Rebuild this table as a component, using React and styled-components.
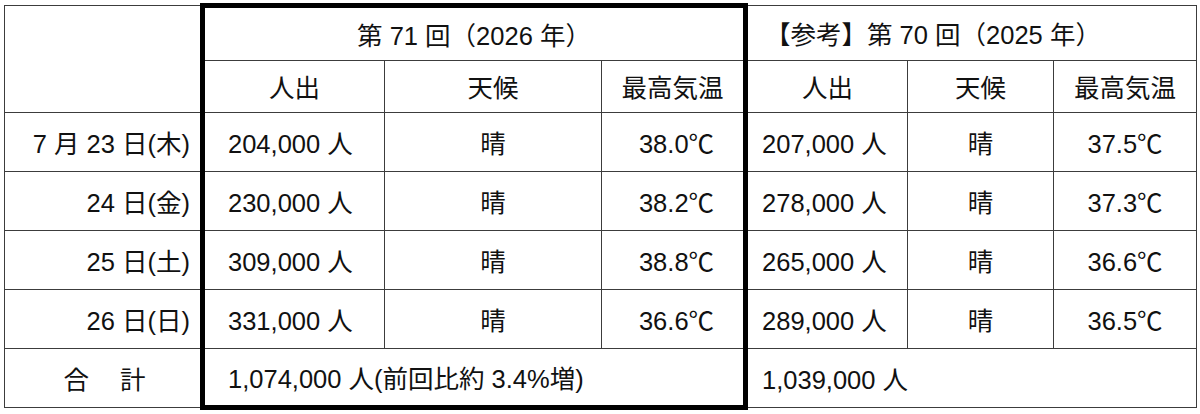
import React from "react";
import styled, { createGlobalStyle, css } from "styled-components";

const GlobalStyle = createGlobalStyle`
  body {
    margin: 0;
    background: #fff;
    font-family: "Liberation Sans", "Noto Sans CJK JP", sans-serif;
    color: #111;
  }
`;

const line = "1px solid #3c3c3c";
const thick = "5px solid #000";

const days = [
  { label: "7 月 23 日(木)", cur: ["204,000 人", "晴", "38.0℃"], prev: ["207,000 人", "晴", "37.5℃"] },
  { label: "24 日(金)", cur: ["230,000 人", "晴", "38.2℃"], prev: ["278,000 人", "晴", "37.3℃"] },
  { label: "25 日(土)", cur: ["309,000 人", "晴", "38.8℃"], prev: ["265,000 人", "晴", "36.6℃"] },
  { label: "26 日(日)", cur: ["331,000 人", "晴", "36.6℃"], prev: ["289,000 人", "晴", "36.5℃"] },
];

export default function App() {
  return (
    <>
      <GlobalStyle />
      <Wrapper>
        <Table>
          <colgroup>
            <col style={{ width: 198 }} />
            <col style={{ width: 182 }} />
            <col style={{ width: 217 }} />
            <col style={{ width: 144 }} />
            <col style={{ width: 162 }} />
            <col style={{ width: 146 }} />
            <col style={{ width: 143 }} />
          </colgroup>
          <tbody>
            <HeadRow $h={55}>
              <Cell rowSpan={2} />
              <Cell colSpan={3} $boxTop $boxLeft $boxRight>
                第 71 回（2026 年）
              </Cell>
              <Cell colSpan={3} $align="left" $pad="0 0 0 17px">
                【参考】第 70 回（2025 年）
              </Cell>
            </HeadRow>
            <HeadRow $h={52}>
              <Cell $boxLeft>人出</Cell>
              <Cell>天候</Cell>
              <Cell $boxRight>最高気温</Cell>
              <Cell>人出</Cell>
              <Cell>天候</Cell>
              <Cell>最高気温</Cell>
            </HeadRow>
            {days.map((d) => (
              <DataRow key={d.label}>
                <Cell $align="right" $pad="0 10px 0 0">
                  {d.label}
                </Cell>
                <Cell $boxLeft $align="left" $pad="0 0 0 23px">
                  {d.cur[0]}
                </Cell>
                <Cell>{d.cur[1]}</Cell>
                <Cell $boxRight $pad="0 0 0 8px">
                  {d.cur[2]}
                </Cell>
                <Cell $align="left" $pad="0 0 0 14px">
                  {d.prev[0]}
                </Cell>
                <Cell>{d.prev[1]}</Cell>
                <Cell>{d.prev[2]}</Cell>
              </DataRow>
            ))}
            <DataRow>
              <Cell $pad="0 0 0 4px">
                <Spaced>合</Spaced>計
              </Cell>
              <Cell colSpan={3} $boxLeft $boxRight $boxBottom $align="left" $pad="0 0 0 23px">
                1,074,000 人(前回比約 3.4%増)
              </Cell>
              <Cell colSpan={3} $align="left" $pad="0 0 0 14px">
                1,039,000 人
              </Cell>
            </DataRow>
          </tbody>
        </Table>
      </Wrapper>
    </>
  );
}

const Wrapper = styled.div`
  padding: 3px 0 0 4px;
`;

const Table = styled.table`
  width: 1192px;
  table-layout: fixed;
  border-collapse: collapse;
  border: 1.5px solid #333;
`;

const HeadRow = styled.tr`
  height: ${(p) => p.$h}px;
`;

const DataRow = styled.tr`
  height: 59px;
`;

const Cell = styled.td`
  border: ${line};
  padding: ${(p) => p.$pad || "0"};
  text-align: ${(p) => p.$align || "center"};
  vertical-align: middle;
  font-size: 25.5px;
  line-height: 1;
  padding-top: 5px;
  white-space: nowrap;
  ${(p) =>
    p.$boxLeft &&
    css`
      border-left: ${thick};
    `}
  ${(p) =>
    p.$boxRight &&
    css`
      border-right: ${thick};
    `}
  ${(p) =>
    p.$boxTop &&
    css`
      border-top: ${thick};
    `}
  ${(p) =>
    p.$boxBottom &&
    css`
      border-bottom: ${thick};
    `}
`;

const Spaced = styled.span`
  margin-right: 31px;
`;
